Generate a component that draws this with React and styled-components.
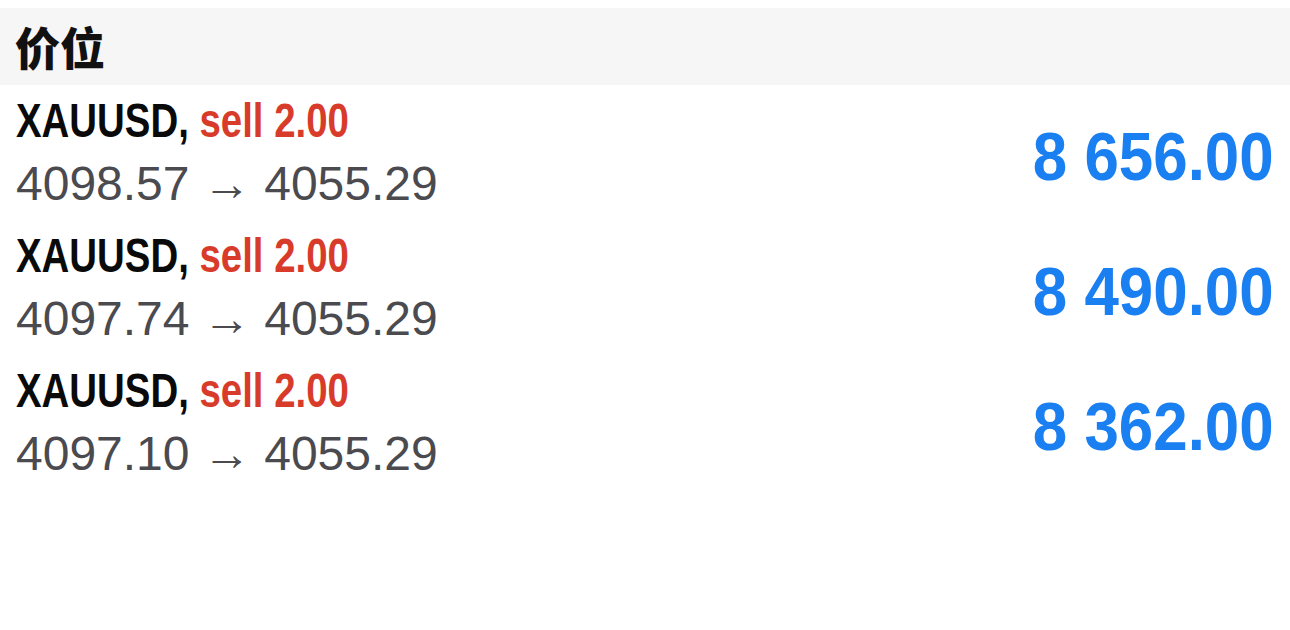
import React from "react";
import styled, { createGlobalStyle } from "styled-components";

const Global = createGlobalStyle`
  html, body {
    margin: 0;
    padding: 0;
    background: #ffffff;
  }
  body {
    font-family: "Liberation Sans", Arial, "Noto Sans CJK SC", sans-serif;
  }
`;

const Page = styled.div`
  width: 1290px;
  height: 630px;
  padding-top: 8px;
  box-sizing: border-box;
  background: #ffffff;
`;

const Header = styled.div`
  height: 77px;
  background: #f6f6f6;
  display: flex;
  align-items: center;
  padding-left: 15px;
  font-family: "Noto Sans CJK SC", sans-serif;
  font-weight: 900;
  font-size: 45px;
  color: #111111;
`;

const List = styled.div`
  display: flex;
  flex-direction: column;
  padding: 0 16px;
`;

const Row = styled.div`
  height: 135px;
  display: flex;
  align-items: center;
  justify-content: space-between;
`;

const Info = styled.div`
  display: flex;
  flex-direction: column;
`;

const Title = styled.div`
  font-weight: 700;
  font-size: 48px;
  line-height: 62px;
  color: #0a0a0a;
  white-space: nowrap;
  transform: scaleX(0.8);
  transform-origin: left center;
`;

const Side = styled.span`
  color: #d93b2b;
`;

const Prices = styled.div`
  font-size: 48px;
  line-height: 63px;
  color: #4a4a4f;
  white-space: nowrap;
`;

const Profit = styled.div`
  margin-top: 6px;
  font-weight: 700;
  font-size: 68px;
  color: #1a7ff0;
  white-space: nowrap;
  transform: scaleX(0.91);
  transform-origin: right center;
`;

const trades = [
  { open: "4098.57", close: "4055.29", profit: "8 656.00" },
  { open: "4097.74", close: "4055.29", profit: "8 490.00" },
  { open: "4097.10", close: "4055.29", profit: "8 362.00" },
];

export default function App() {
  return (
    <Page>
      <Global />
      <Header>价位</Header>
      <List>
        {trades.map((t, i) => (
          <Row key={i}>
            <Info>
              <Title>
                XAUUSD, <Side>sell 2.00</Side>
              </Title>
              <Prices>
                {t.open} → {t.close}
              </Prices>
            </Info>
            <Profit>{t.profit}</Profit>
          </Row>
        ))}
      </List>
    </Page>
  );
}
